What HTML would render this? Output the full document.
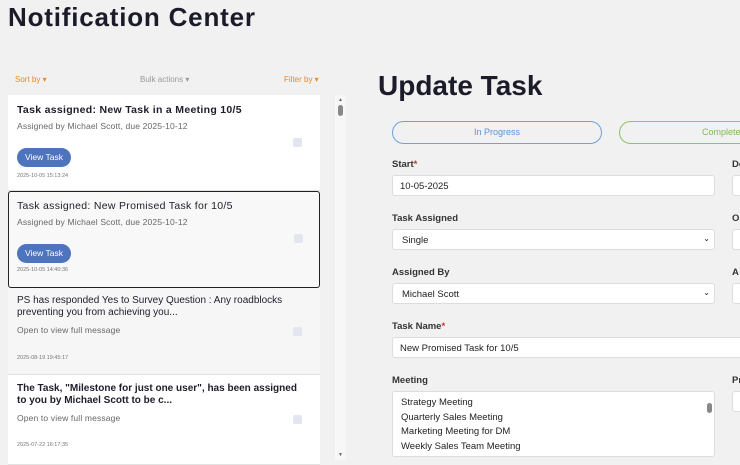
<!DOCTYPE html>
<html><head><style>
*{box-sizing:border-box;margin:0;padding:0}
body{width:740px;height:460px;overflow:hidden;background:#f1f1f1;font-family:"Liberation Sans",sans-serif;position:relative;color:#222}
.a{position:absolute;white-space:nowrap}
h1{position:absolute;left:8px;top:2px;font-size:26px;letter-spacing:0.8px;font-weight:bold;color:#1b1b2a}
h2{position:absolute;left:378px;top:70px;font-size:28px;font-weight:bold;color:#1b1b2a}
.card{position:absolute;left:8px;width:312px;background:#fff;border-bottom:1px solid #e2e2e2}
.t{position:absolute;left:9px;font-size:10px;color:#1d1d2b}
.s{position:absolute;left:9px;font-size:8.5px;letter-spacing:0.15px;color:#666}
.d{position:absolute;left:9px;font-size:5.5px;color:#777}
.btn{position:absolute;left:9px;width:54px;height:19px;border-radius:10px;background:#4d74bd;color:#fff;font-size:8.5px;text-align:center;line-height:19px}
.cb{position:absolute;left:285px;width:9px;height:9px;background:#e2e6ee;border-radius:2px}
.lbl{position:absolute;left:392px;font-size:9.5px;font-weight:bold;color:#333}
.lbl2{position:absolute;left:732px;font-size:9.5px;font-weight:bold;color:#333}
.in{position:absolute;left:392px;width:323px;height:21px;background:#fff;border:1px solid #ddd;border-radius:3px;font-size:9.5px;padding:5px 7px;color:#222}
.in2{position:absolute;left:732px;width:20px;height:21px;background:#fff;border:1px solid #ddd;border-radius:3px}
.car{position:absolute;right:4px;top:4px;font-size:8px}
</style></head><body>
<h1>Notification Center</h1>
<div class="a" style="left:15px;top:75px;font-size:8px;color:#e8892a">Sort by ▾</div>
<div class="a" style="left:140px;top:75px;font-size:8px;color:#999">Bulk actions ▾</div>
<div class="a" style="left:284px;top:75px;font-size:8px;color:#e8892a">Filter by ▾</div>

<div class="card" style="top:95px;height:96px">
<div class="t" style="top:9px;font-weight:bold;font-size:10.5px;letter-spacing:0.3px">Task assigned: New Task in a Meeting 10/5</div>
<div class="s" style="top:26px">Assigned by Michael Scott, due 2025-10-12</div>
<div class="cb" style="top:43px"></div>
<div class="btn" style="top:53px">View Task</div>
<div class="d" style="top:78px">2025-10-05 15:13:24</div>
</div>
<div class="card" style="top:191px;height:97px;background:#f8f8f8;border:1.5px solid #222;border-radius:3px">
<div class="t" style="top:8px;font-size:10.5px;letter-spacing:0.3px;left:8px">Task assigned: New Promised Task for 10/5</div>
<div class="s" style="top:25px;left:8px">Assigned by Michael Scott, due 2025-10-12</div>
<div class="cb" style="top:42px"></div>
<div class="btn" style="top:52px;left:8px">View Task</div>
<div class="d" style="top:75px;left:8px">2025-10-05 14:40:36</div>
</div>
<div class="card" style="top:288px;height:87px;background:#f6f6f6">
<div class="t" style="top:7px;line-height:12px">PS has responded Yes to Survey Question : Any roadblocks<br>preventing you from achieving you...</div>
<div class="s" style="top:37px">Open to view full message</div>
<div class="cb" style="top:39px"></div>
<div class="d" style="top:67px">2025-08-19 19:45:17</div>
</div>
<div class="card" style="top:375px;height:90px">
<div class="t" style="top:8px;line-height:12px;font-weight:bold">The Task, "Milestone for just one user", has been assigned<br>to you by Michael Scott to be c...</div>
<div class="s" style="top:38px">Open to view full message</div>
<div class="cb" style="top:40px"></div>
<div class="d" style="top:67px">2025-07-22 16:17:35</div>
</div>
<div class="a" style="left:335px;top:95px;width:11px;height:365px;background:#f7f7f7"></div>
<div class="a" style="left:338px;top:97px;font-size:5px;color:#666">▲</div>
<div class="a" style="left:338px;top:105px;width:5px;height:11px;background:#888;border-radius:3px"></div>
<div class="a" style="left:338px;top:452px;font-size:5px;color:#666">▼</div>

<h2>Update Task</h2>
<div class="a" style="left:392px;top:121px;width:210px;height:23px;border:1px solid #6aa4e0;border-radius:12px;text-align:center;line-height:21px;font-size:9px;color:#5b93d6">In Progress</div>
<div class="a" style="left:619px;top:121px;width:160px;height:23px;border:1px solid #8cc36a;border-radius:12px;line-height:21px;font-size:9px;color:#7db955;padding-left:82px">Complete</div>

<div class="lbl" style="top:159px">Start<span style="color:#c33">*</span></div>
<div class="lbl2" style="top:159px">De</div>
<div class="in" style="top:175px;padding-left:7px">10-05-2025</div><div class="in2" style="top:175px"></div>
<div class="lbl" style="top:213px">Task Assigned</div><div class="lbl2" style="top:213px">O</div>
<div class="in" style="top:229px;padding-left:9px">Single<span class="car">⌄</span></div><div class="in2" style="top:229px"></div>
<div class="lbl" style="top:267px">Assigned By</div><div class="lbl2" style="top:267px">A</div>
<div class="in" style="top:283px;padding-left:9px">Michael Scott<span class="car">⌄</span></div><div class="in2" style="top:283px"></div>
<div class="lbl" style="top:321px">Task Name<span style="color:#c33">*</span></div>
<div class="in" style="top:337px;width:360px;padding-left:7px">New Promised Task for 10/5</div>
<div class="lbl" style="top:375px">Meeting</div><div class="lbl2" style="top:375px">Pr</div>
<div class="in" style="top:391px;height:66px;padding:4px 8px;line-height:14.5px">Strategy Meeting<br>Quarterly Sales Meeting<br>Marketing Meeting for DM<br>Weekly Sales Team Meeting</div>
<div class="in2" style="top:391px"></div>
<div class="a" style="left:707px;top:403px;width:5px;height:10px;background:#888;border-radius:3px"></div>
</body></html>
